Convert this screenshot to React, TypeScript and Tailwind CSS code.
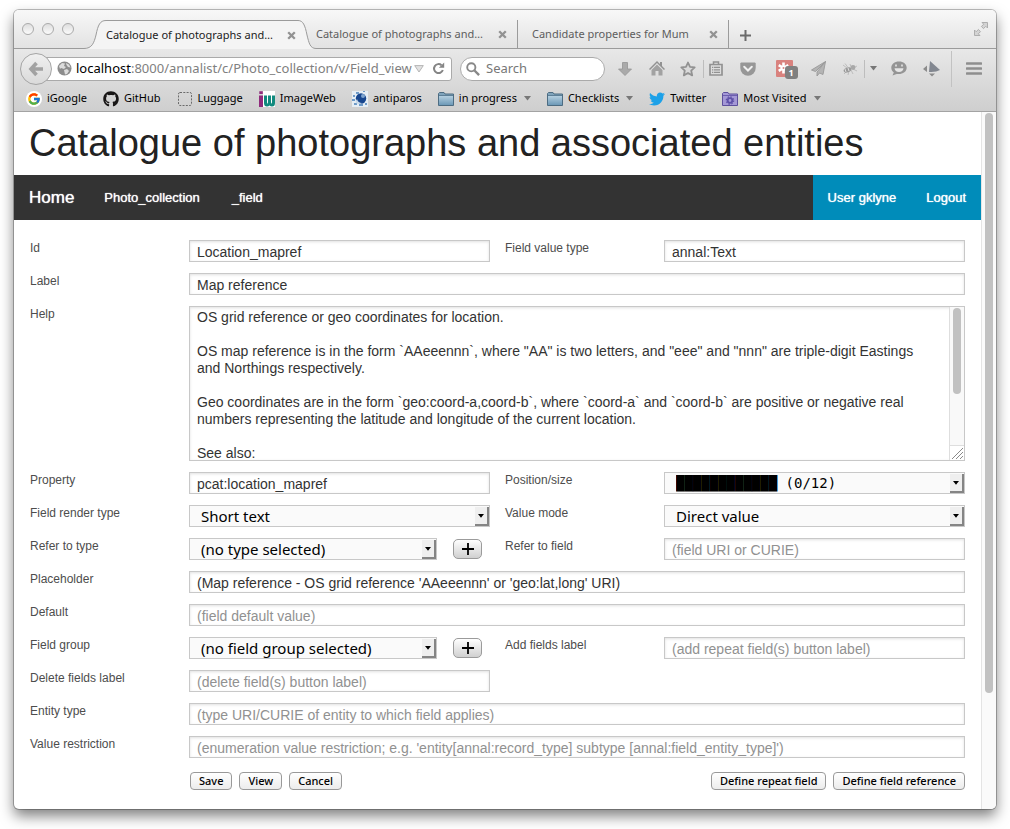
import type { ReactNode } from "react";
import { FcGoogle } from "react-icons/fc";
import { FaGithub, FaTwitter } from "react-icons/fa";

const inputClass =
  "block h-[22px] w-full min-w-0 rounded-none border border-[#c8c8c8] bg-white px-[7px] pt-px text-sm text-[#333] shadow-[inset_0_1px_3px_rgba(0,0,0,0.12)] outline-none placeholder:text-[#919191] placeholder:opacity-100";

const helpText = `OS grid reference or geo coordinates for location.

OS map reference is in the form \`AAeeennn\`, where "AA" is two letters, and "eee" and "nnn" are triple-digit Eastings and Northings respectively.

Geo coordinates are in the form \`geo:coord-a,coord-b\`, where \`coord-a\` and \`coord-b\` are positive or negative real numbers representing the latitude and longitude of the current location.

See also:`;

function Caret() {
  return (
    <svg width="7" height="5" viewBox="0 0 7 5" className="shrink-0">
      <path d="M0 0h7L3.5 4.5z" fill="#777" />
    </svg>
  );
}

function CloseIcon() {
  return (
    <svg width="9" height="9" viewBox="0 0 9 9">
      <path d="M1.2 1.2l6.6 6.6M7.8 1.2L1.2 7.8" stroke="#929292" strokeWidth="2.3" />
    </svg>
  );
}

function FolderIcon() {
  return (
    <svg width="16" height="14" viewBox="0 0 16 14">
      <defs>
        <linearGradient id="folder" x1="0" y1="0" x2="0" y2="1">
          <stop offset="0" stopColor="#b4cfe0" />
          <stop offset="1" stopColor="#6d99b7" />
        </linearGradient>
      </defs>
      <path d="M.5 13.5v-12l1-1h4.5l1 1.5h8.5v11.500z" fill="#7fa3bb" stroke="#4d6c82" />
      <path d="M1 4h14v9H1z" fill="url(#folder)" />
      <path d="M1 3.500h14" stroke="#5d7f97" />
    </svg>
  );
}

function SmartFolderIcon() {
  return (
    <svg width="16" height="14" viewBox="0 0 16 14">
      <path d="M.5 13.500v-12l1-1h4.500l1 1.500h8.500v11.500z" fill="#a498d6" stroke="#5d4f9c" />
      <path d="M1 3.500h14" stroke="#6c5eae" />
      <circle cx="8" cy="8.500" r="2.300" fill="none" stroke="#5f51a8" strokeWidth="1.800" />
      <circle cx="8" cy="8.500" r="3.700" fill="none" stroke="#5f51a8" strokeWidth="1.200" strokeDasharray="1.450 1.450" />
    </svg>
  );
}

function ImageWebIcon() {
  return (
    <svg width="16" height="16" viewBox="0 0 16 16">
      <path d="M4 0h12v16H4z" fill="#fff" />
      <path d="M0 4.500h4V16H0zM.3.300h3.500v2.800H.3z" fill="#8f2b7c" />
      <path d="M5 4.500h3v6.500q0 1.500 1 1.500V4.500h3v6.500q0 1.500 1 1.500V4.500h3V12q0 3.500-3 3.500-1.500 0-2.500-1-1 1-2.500 1-3 0-3-3.500z" fill="#118a7e" />
    </svg>
  );
}

function AntiparosIcon() {
  return (
    <svg width="16" height="16" viewBox="0 0 16 16">
      <path d="M0 0h16v16H0z" fill="#e6eef5" />
      <circle cx="9" cy="7.500" r="5.200" fill="#17468f" />
      <circle cx="11" cy="5" r="2" fill="#7ea4cf" />
      <path d="M4 1h3v2H4zM1 4h2v2H1zM0 8h3v2H0zM2 12h3v2H2zM7 13h4v2H7zM13 12h2v2h-2zM11 0h2v1h-2z" fill="#6f9bc8" />
      <path d="M5 8q1 4 5 4-3 2-6 0-1-2 1-4z" fill="#c8daea" />
    </svg>
  );
}

function LuggageIcon() {
  return (
    <svg width="14" height="14" viewBox="0 0 14 14">
      <rect x=".5" y=".5" width="13" height="13" rx="1.500" fill="none" stroke="#6a6a6a" strokeDasharray="2 1.300" />
    </svg>
  );
}

function Tab({ title }: { title: string }) {
  return (
    <>
      <a href="#tab" className="whitespace-nowrap">
        {title}
      </a>
      <button type="button" aria-label="Close tab" className="shrink-0">
        <CloseIcon />
      </button>
    </>
  );
}

function TitleBar() {
  return (
    <div className="flex h-[39px] items-end bg-linear-to-b from-[#f8f8f8] to-[#e2e2e2] text-[11px] text-[#5d5d5d]">
      <div className="flex h-full w-[70px] shrink-0 gap-2 border-b border-[#9b9b9b] pt-[13px] pl-2">
        {[0, 1, 2].map((n) => (
          <span key={n} className="size-3 rounded-full border border-[#aaa] bg-linear-to-b from-[#dedede] to-[#fbfbfb]" />
        ))}
      </div>
      <svg width="22" height="29" viewBox="0 0 22 29" className="shrink-0">
        <path d="M0 28.500C8 28.500 10 23 12 15 14 5 16 .5 22 .5V29H0z" fill="#f4f4f4" />
        <path d="M0 28.500C8 28.500 10 23 12 15 14 5 16 .5 22 .5" fill="none" stroke="#9b9b9b" />
      </svg>
      <div className="flex h-[29px] w-[192px] shrink-0 items-center justify-between border-t border-[#9b9b9b] bg-[#f4f4f4] pr-0.5 text-[#222]">
        <Tab title="Catalogue of photographs and…" />
      </div>
      <svg width="18" height="29" viewBox="0 0 18 29" className="shrink-0">
        <path d="M18 28.500C12 28.500 11 23 9 15 7 5 5 .5 0 .5V29h18z" fill="#f4f4f4" />
        <path d="M18 28.500C12 28.500 11 23 9 15 7 5 5 .5 0 .5" fill="none" stroke="#9b9b9b" />
      </svg>
      <div className="flex h-[29px] w-[202px] shrink-0 items-center justify-between border-r border-b border-[#9b9b9b] pt-px pr-2.5">
        <Tab title="Catalogue of photographs and…" />
      </div>
      <div className="flex h-[29px] w-[211px] shrink-0 items-center justify-between border-r border-b border-[#9b9b9b] pt-px pr-2.5 pl-3.5">
        <Tab title="Candidate properties for Mum" />
      </div>
      <div className="flex h-full flex-1 justify-between border-b border-[#9b9b9b] pr-2 pl-[11px]">
        <button type="button" aria-label="New tab" className="pt-3">
          <svg width="11" height="11" viewBox="0 0 11 11">
            <path d="M5.500 0v11M0 5.500h11" stroke="#6b6b6b" strokeWidth="2" />
          </svg>
        </button>
        <button type="button" aria-label="Full screen" className="self-start pt-3">
          <svg width="14" height="14" viewBox="0 0 14 14" fill="#d4d4d4" stroke="#a8a8a8" strokeWidth=".9">
            <path d="M8 .500h5.500V6l-1.700-1.700-2.300 2.300-2.100-2.100 2.300-2.300zM6 13.500H.500V8l1.700 1.700 2.200-2.200 2.100 2.100-2.200 2.200z" />
          </svg>
        </button>
      </div>
    </div>
  );
}

function ToolButton({ label, width, children }: { label: string; width: string; children: ReactNode }) {
  return (
    <button type="button" aria-label={label} className={`flex h-6 shrink-0 items-center justify-center ${width}`}>
      {children}
    </button>
  );
}

function Toolbar() {
  return (
    <div className="flex h-[39px] items-center pl-1.5">
      <button
        type="button"
        aria-label="Back"
        className="relative z-10 flex size-8 shrink-0 items-center justify-center rounded-full border border-[#a5a5a5] bg-linear-to-b from-[#f0f0f0] to-[#dadada]"
      >
        <svg width="16" height="16" viewBox="0 0 16 16">
          <path d="M8.500 2L3 8l5.500 6M3 8h12" fill="none" stroke="#a2a2a2" strokeWidth="3.600" />
        </svg>
      </button>
      <div className="-ml-2 flex h-6 min-w-0 flex-1 items-center rounded-r-[3px] border border-[#aaa] bg-white pr-1.5 pl-3 text-[13px]">
        <svg width="15" height="15" viewBox="0 0 15 15" className="mr-1 shrink-0">
          <circle cx="7.500" cy="7.500" r="7" fill="#8c8c8c" />
          <path d="M2 5l3-3 3 .5-1 2.500 2 1-2 2-3-1-1 1zM9 2l3 1.500 1.500 3L11 6 9.500 4zM7 9l3-1 2 2-2 3-2 .5z" fill="#dcdcdc" />
        </svg>
        <p className="min-w-0 flex-1 whitespace-nowrap text-[#808080]">
          <span className="text-black">localhost</span>:8000/annalist/c/Photo_collection/v/Field_view
        </p>
        <svg width="10" height="8" viewBox="0 0 10 8" className="mr-2 ml-1 shrink-0">
          <path d="M.7.600h8.600L5 7z" fill="#e2e2e2" stroke="#b5b5b5" />
        </svg>
        <button type="button" aria-label="Reload">
          <svg width="13" height="13" viewBox="0 0 13 13">
            <path d="M9.500 3.200A4.500 4.500 0 1 0 10.800 8" fill="none" stroke="#858585" strokeWidth="2" />
            <path d="M12.200.500v5.300H6.900z" fill="#858585" />
          </svg>
        </button>
      </div>
      <label className="ml-2 flex h-6 w-[145px] shrink-0 items-center rounded-full border border-[#aaa] bg-white pl-[5px]">
        <svg width="14" height="14" viewBox="0 0 14 14" className="mr-1.5 shrink-0">
          <circle cx="5.300" cy="5.300" r="4.100" fill="none" stroke="#888" strokeWidth="1.900" />
          <path d="M8.500 8.500l4.600 4.600" stroke="#888" strokeWidth="2.400" />
        </svg>
        <input aria-label="Search" placeholder="Search" className="w-full min-w-0 bg-transparent text-[13px] outline-none placeholder:text-[#777] placeholder:opacity-100" />
      </label>
      <div className="flex items-center pl-1 text-[#999]">
        <ToolButton label="Downloads" width="w-8">
          <svg width="14" height="14" viewBox="0 0 14 14">
            <path d="M4.500.500h5V7h4L7 13.500.500 7h4z" fill="#aaa" stroke="#949494" strokeWidth=".8" />
          </svg>
        </ToolButton>
        <ToolButton label="Home" width="w-8">
          <svg width="16" height="15" viewBox="0 0 16 15">
            <path d="M8 0L11 3V1h2v4l3 3-1 1-7-7-7 7-1-1z" fill="#929292" />
            <path d="M8 3.500l5.500 5.500V14.500H9.500V10h-3v4.500h-4V9z" fill="#a2a2a2" />
          </svg>
        </ToolButton>
        <ToolButton label="Bookmark this page" width="w-[30px]">
          <svg width="16" height="16" viewBox="0 0 16 16">
            <path d="M8 1.500l2 4.400 4.700.5-3.500 3.200 1 4.800L8 12l-4.200 2.400 1-4.800L1.300 6.400 6 5.900z" fill="#dadada" stroke="#929292" strokeWidth="1.800" strokeLinejoin="round" />
          </svg>
        </ToolButton>
        <span className="h-[18px] w-px bg-[#bdbdbd]" />
        <ToolButton label="Bookmarks" width="w-6">
          <svg width="14" height="15" viewBox="0 0 14 15">
            <path d="M4.500 3V1h5v2" fill="none" stroke="#929292" strokeWidth="1.500" />
            <path d="M1 3.500h12V14H1z" fill="#ddd" stroke="#929292" strokeWidth="1.700" />
            <path d="M3 6.300h1.300M5 6.300h6M3 8.800h1.300M5 8.800h6M3 11.300h1.300M5 11.300h6" stroke="#929292" strokeWidth="1.300" />
          </svg>
        </ToolButton>
        <ToolButton label="Save to Pocket" width="w-10">
          <svg width="16" height="14" viewBox="0 0 16 14">
            <path d="M1 .500h14l.7.700V6a7.700 7.700 0 0 1-15.400 0V1.200z" fill="#979797" />
            <path d="M4.200 4.800L8 8.500l3.800-3.700" fill="none" stroke="#f0f0f0" strokeWidth="2" strokeLinecap="round" />
          </svg>
        </ToolButton>
        <ToolButton label="Add-on, 1 notification" width="w-8">
          <span className="relative block size-[17px] rounded-[1px] bg-[#d9827e]">
            <svg width="17" height="17" viewBox="0 0 17 17">
              <path d="M7.500 2.500v11M2.700 5.200l9.600 5.600M12.300 5.200l-9.600 5.600" stroke="#fff" strokeWidth="2.600" />
              <circle cx="7.500" cy="8" r="1" fill="#d9827e" />
            </svg>
            <span className="absolute -right-[5px] -bottom-0.5 flex size-[13px] items-center justify-center rounded-[3px] bg-[#808080] text-[9px] font-bold text-white">
              1
            </span>
          </span>
        </ToolButton>
        <ToolButton label="Send" width="w-9">
          <svg width="15" height="15" viewBox="0 0 15 15">
            <path d="M14.500.500L.500 9l4 1.500zM14.500.500L6 11v4l2.500-3 3.500 1.500z" fill="#b4b4b4" stroke="#999" strokeWidth=".9" />
          </svg>
        </ToolButton>
        <ToolButton label="Firebug" width="w-7">
          <svg width="16" height="12" viewBox="0 0 16 12">
            <path d="M1 2l4 3M3 .500l3 4M8 1l1 3M15 3l-4 2M15 8l-4-2M2 11l3-3M6 12l1-4M11 11L9 7" stroke="#bdbdbd" />
            <ellipse cx="5.500" cy="7" rx="4" ry="2.400" fill="#9b9b9b" transform="rotate(-18 5.500 7)" />
            <circle cx="11" cy="4.500" r="2.400" fill="#a8a8a8" />
            <path d="M3 6l1 3M6 5l1 3" stroke="#ddd" />
          </svg>
        </ToolButton>
        <span className="h-[18px] w-px bg-[#bdbdbd]" />
        <ToolButton label="Firebug options" width="w-4">
          <Caret />
        </ToolButton>
        <ToolButton label="Chat" width="w-9">
          <svg width="16" height="15" viewBox="0 0 16 15">
            <path d="M8 .500C3.500.500.300 3.200.300 6.800c0 2 1 3.700 2.500 4.800L1.500 14.500l4.200-1.600c5 1 10-1.700 10-6.100C15.700 3.200 12.500.500 8 .500z" fill="#959595" />
            <path d="M5 3.500v2m6-2v2" stroke="#e6e6e6" strokeWidth="1.600" />
            <path d="M3.500 7.300h9q-.5 3.700-4.500 3.700T3.500 7.300z" fill="#e6e6e6" />
          </svg>
        </ToolButton>
        <ToolButton label="Announcements" width="w-7">
          <svg width="17" height="16" viewBox="0 0 17 16">
            <path d="M7 0l10 9q-4 2.500-11 2z" fill="#828790" />
            <path d="M0 8l4-3.500V11zM6 12.500h6L9 15.500z" fill="#8c8c8c" />
          </svg>
        </ToolButton>
        <span className="ml-1.5 h-[36px] w-px bg-[#c2c2c2]" />
        <ToolButton label="Menu" width="w-11">
          <svg width="16" height="13" viewBox="0 0 16 13">
            <path d="M1 1.500h14M1 6.500h14M1 11.500h14" stroke="#8e8e8e" strokeWidth="2.600" strokeLinecap="round" />
          </svg>
        </ToolButton>
      </div>
    </div>
  );
}

const bookmarks: { name: string; icon: ReactNode; menu?: boolean }[] = [
  {
    name: "iGoogle",
    icon: (
      <span className="flex size-4 items-center justify-center rounded-full bg-white">
        <FcGoogle size={14} />
      </span>
    ),
  },
  { name: "GitHub", icon: <FaGithub size={16} color="#181616" /> },
  { name: "Luggage", icon: <LuggageIcon /> },
  { name: "ImageWeb", icon: <ImageWebIcon /> },
  { name: "antiparos", icon: <AntiparosIcon /> },
  { name: "in progress", icon: <FolderIcon />, menu: true },
  { name: "Checklists", icon: <FolderIcon />, menu: true },
  { name: "Twitter", icon: <FaTwitter size={16} color="#1da1e8" /> },
  { name: "Most Visited", icon: <SmartFolderIcon />, menu: true },
];

function BookmarksBar() {
  return (
    <nav aria-label="Bookmarks" className="flex h-6 items-center gap-4 border-b border-[#a3a3a3] pb-0.5 pl-3 text-[11px] text-black">
      {bookmarks.map((b) => (
        <a key={b.name} href="#bookmark" className="flex items-center gap-[5px] whitespace-nowrap">
          <span className="flex w-4 justify-center">{b.icon}</span>
          {b.name}
          {b.menu && (
            <span className="pl-0.5">
              <Caret />
            </span>
          )}
        </a>
      ))}
    </nav>
  );
}

function Field({ id, label, wide, children }: { id: string; label: string; wide?: boolean; children: ReactNode }) {
  return (
    <>
      <label htmlFor={id} className="text-xs leading-4 text-[#4d4d4d]">
        {label}
      </label>
      <div className={wide ? "col-span-3 min-w-0" : "min-w-0"}>{children}</div>
    </>
  );
}

function Text({ id, value, hint }: { id: string; value?: string; hint?: string }) {
  return <input id={id} type="text" defaultValue={value} placeholder={hint} className={inputClass} />;
}

function Select({ id, value, mono }: { id: string; value: string; mono?: boolean }) {
  return (
    <div className="relative min-w-0 flex-1">
      <select
        id={id}
        className={`block h-[22px] w-full appearance-none rounded-none border border-[#c8c8c8] bg-[#fafafa] pr-5 pl-[11px] leading-5 text-black outline-none ${
          mono ? "font-['DejaVu_Sans_Mono',monospace] text-sm" : "font-['Noto_Sans',sans-serif] text-[15px]"
        }`}
      >
        <option>{value}</option>
      </select>
      <span className="pointer-events-none absolute top-0.5 right-px bottom-px flex w-3.5 items-center justify-center border-r-2 border-b-2 border-[#858585] bg-[#efefef]">
        <svg width="6" height="4" viewBox="0 0 6 4">
          <path d="M0 0h6L3 3.800z" fill="#000" />
        </svg>
      </span>
    </div>
  );
}

function SelectWithAdd({ id, value }: { id: string; value: string }) {
  return (
    <div className="flex items-center gap-4 pr-2">
      <Select id={id} value={value} />
      <button
        type="button"
        aria-label="Add new"
        className="flex h-5 w-[29px] items-center justify-center rounded-[5px] border border-[#9b9b9b] bg-linear-to-b from-white to-[#d0d0d0]"
      >
        <svg width="12" height="12" viewBox="0 0 12 12">
          <path d="M6 0v12M0 6h12" stroke="#000" strokeWidth="1.800" />
        </svg>
      </button>
    </div>
  );
}

function ActionButton({ children }: { children: ReactNode }) {
  return (
    <button
      type="button"
      className="h-[18px] rounded-[4px] border border-[#999] bg-linear-to-b from-white to-[#ececec] px-2 font-['Noto_Sans',sans-serif] text-[11px] leading-4 font-medium text-black"
    >
      {children}
    </button>
  );
}

function FieldForm() {
  return (
    <form className="pt-5 pr-4 pb-[19px] pl-4" onSubmit={(e) => e.preventDefault()}>
      <div className="grid grid-cols-[144px_minmax(0,1fr)_144px_minmax(0,1fr)] gap-x-[15px] gap-y-[11px]">
        <Field id="id" label="Id">
          <Text id="id" value="Location_mapref" />
        </Field>
        <Field id="value-type" label="Field value type">
          <Text id="value-type" value="annal:Text" />
        </Field>
        <Field id="label" label="Label" wide>
          <Text id="label" value="Map reference" />
        </Field>
        <Field id="help" label="Help" wide>
          <div className="flex h-[155px] border border-[#c8c8c8] shadow-[inset_0_1px_3px_rgba(0,0,0,0.12)]">
            <textarea
              id="help"
              defaultValue={helpText}
              className="block h-full min-w-0 flex-1 resize-none overflow-hidden bg-transparent pt-0.5 pr-6 pl-[7px] text-sm leading-[17px] text-[#333] outline-none"
            />
            <div className="flex w-[15px] flex-col border-l border-[#dedede] bg-[#f9f9f9]">
              <div className="flex flex-1 justify-center pt-px">
                <span className="h-[86px] w-2 rounded-full bg-[#c1c1c1]" />
              </div>
              <div className="flex h-[15px] items-end justify-end border-t border-[#dedede] bg-white p-px">
                <svg width="11" height="11" viewBox="0 0 11 11">
                  <path d="M0 11L11 0M4 11l7-7M8 11l3-3" stroke="#8a8a8a" />
                </svg>
              </div>
            </div>
          </div>
        </Field>
        <Field id="property" label="Property">
          <Text id="property" value="pcat:location_mapref" />
        </Field>
        <Field id="position" label="Position/size">
          <Select id="position" value="████████████ (0/12)" mono />
        </Field>
        <Field id="render-type" label="Field render type">
          <Select id="render-type" value="Short text" />
        </Field>
        <Field id="value-mode" label="Value mode">
          <Select id="value-mode" value="Direct value" />
        </Field>
        <Field id="refer-type" label="Refer to type">
          <SelectWithAdd id="refer-type" value="(no type selected)" />
        </Field>
        <Field id="refer-field" label="Refer to field">
          <Text id="refer-field" hint="(field URI or CURIE)" />
        </Field>
        <Field id="placeholder" label="Placeholder" wide>
          <Text id="placeholder" value="(Map reference - OS grid reference 'AAeeennn' or 'geo:lat,long' URI)" />
        </Field>
        <Field id="default" label="Default" wide>
          <Text id="default" hint="(field default value)" />
        </Field>
        <Field id="group" label="Field group">
          <SelectWithAdd id="group" value="(no field group selected)" />
        </Field>
        <Field id="add-label" label="Add fields label">
          <Text id="add-label" hint="(add repeat field(s) button label)" />
        </Field>
        <Field id="delete-label" label="Delete fields label">
          <Text id="delete-label" hint="(delete field(s) button label)" />
        </Field>
        <div className="col-span-2" />
        <Field id="entity-type" label="Entity type" wide>
          <Text id="entity-type" hint="(type URI/CURIE of entity to which field applies)" />
        </Field>
        <Field id="restriction" label="Value restriction" wide>
          <Text id="restriction" hint="(enumeration value restriction; e.g. 'entity[annal:record_type] subtype [annal:field_entity_type]')" />
        </Field>
      </div>
      <div className="mt-3.5 flex justify-between pl-40">
        <div className="flex gap-[7px]">
          <ActionButton>Save</ActionButton>
          <ActionButton>View</ActionButton>
          <ActionButton>Cancel</ActionButton>
        </div>
        <div className="flex gap-[7px]">
          <ActionButton>Define repeat field</ActionButton>
          <ActionButton>Define field reference</ActionButton>
        </div>
      </div>
    </form>
  );
}

export default function App() {
  return (
    <div className="min-h-screen bg-white px-3.5 pt-2.5 pb-5">
      <div className="overflow-hidden rounded-[5px] bg-white shadow-[0_0_0_1px_rgba(0,0,0,0.25),0_7px_14px_rgba(0,0,0,0.5)]">
        <header className="font-['Noto_Sans',sans-serif]">
          <TitleBar />
          <div className="bg-linear-to-b from-[#e8e8e8] to-[#cecece]">
            <Toolbar />
            <BookmarksBar />
          </div>
        </header>
        <div className="flex font-['Liberation_Sans',Arial,sans-serif]">
          <main className="min-w-0 flex-1">
            <h1 className="h-[63px] pl-[15px] text-[38px] leading-[62px] whitespace-nowrap text-[#222]">
              Catalogue of photographs and associated entities
            </h1>
            <nav className="flex h-[45px] items-center justify-between bg-[#333] text-[13px] text-white [text-shadow:0_0_1px_#fff]">
              <div className="flex items-center pl-[15px]">
                <a href="#home" className="mr-[30px] text-[17px]">
                  Home
                </a>
                <a href="#collection" className="mr-8">
                  Photo_collection
                </a>
                <a href="#field">_field</a>
              </div>
              <div className="flex h-full items-center gap-[30px] bg-[#008cba] px-[15px]">
                <a href="#user">User gklyne</a>
                <a href="#logout">Logout</a>
              </div>
            </nav>
            <FieldForm />
          </main>
          <div className="flex w-[15px] shrink-0 flex-col items-center border-l border-[#e4e4e4] bg-[#fafafa] pt-px">
            <span className="h-5/6 w-2 rounded-full bg-[#c1c1c1]" />
          </div>
        </div>
      </div>
    </div>
  );
}
